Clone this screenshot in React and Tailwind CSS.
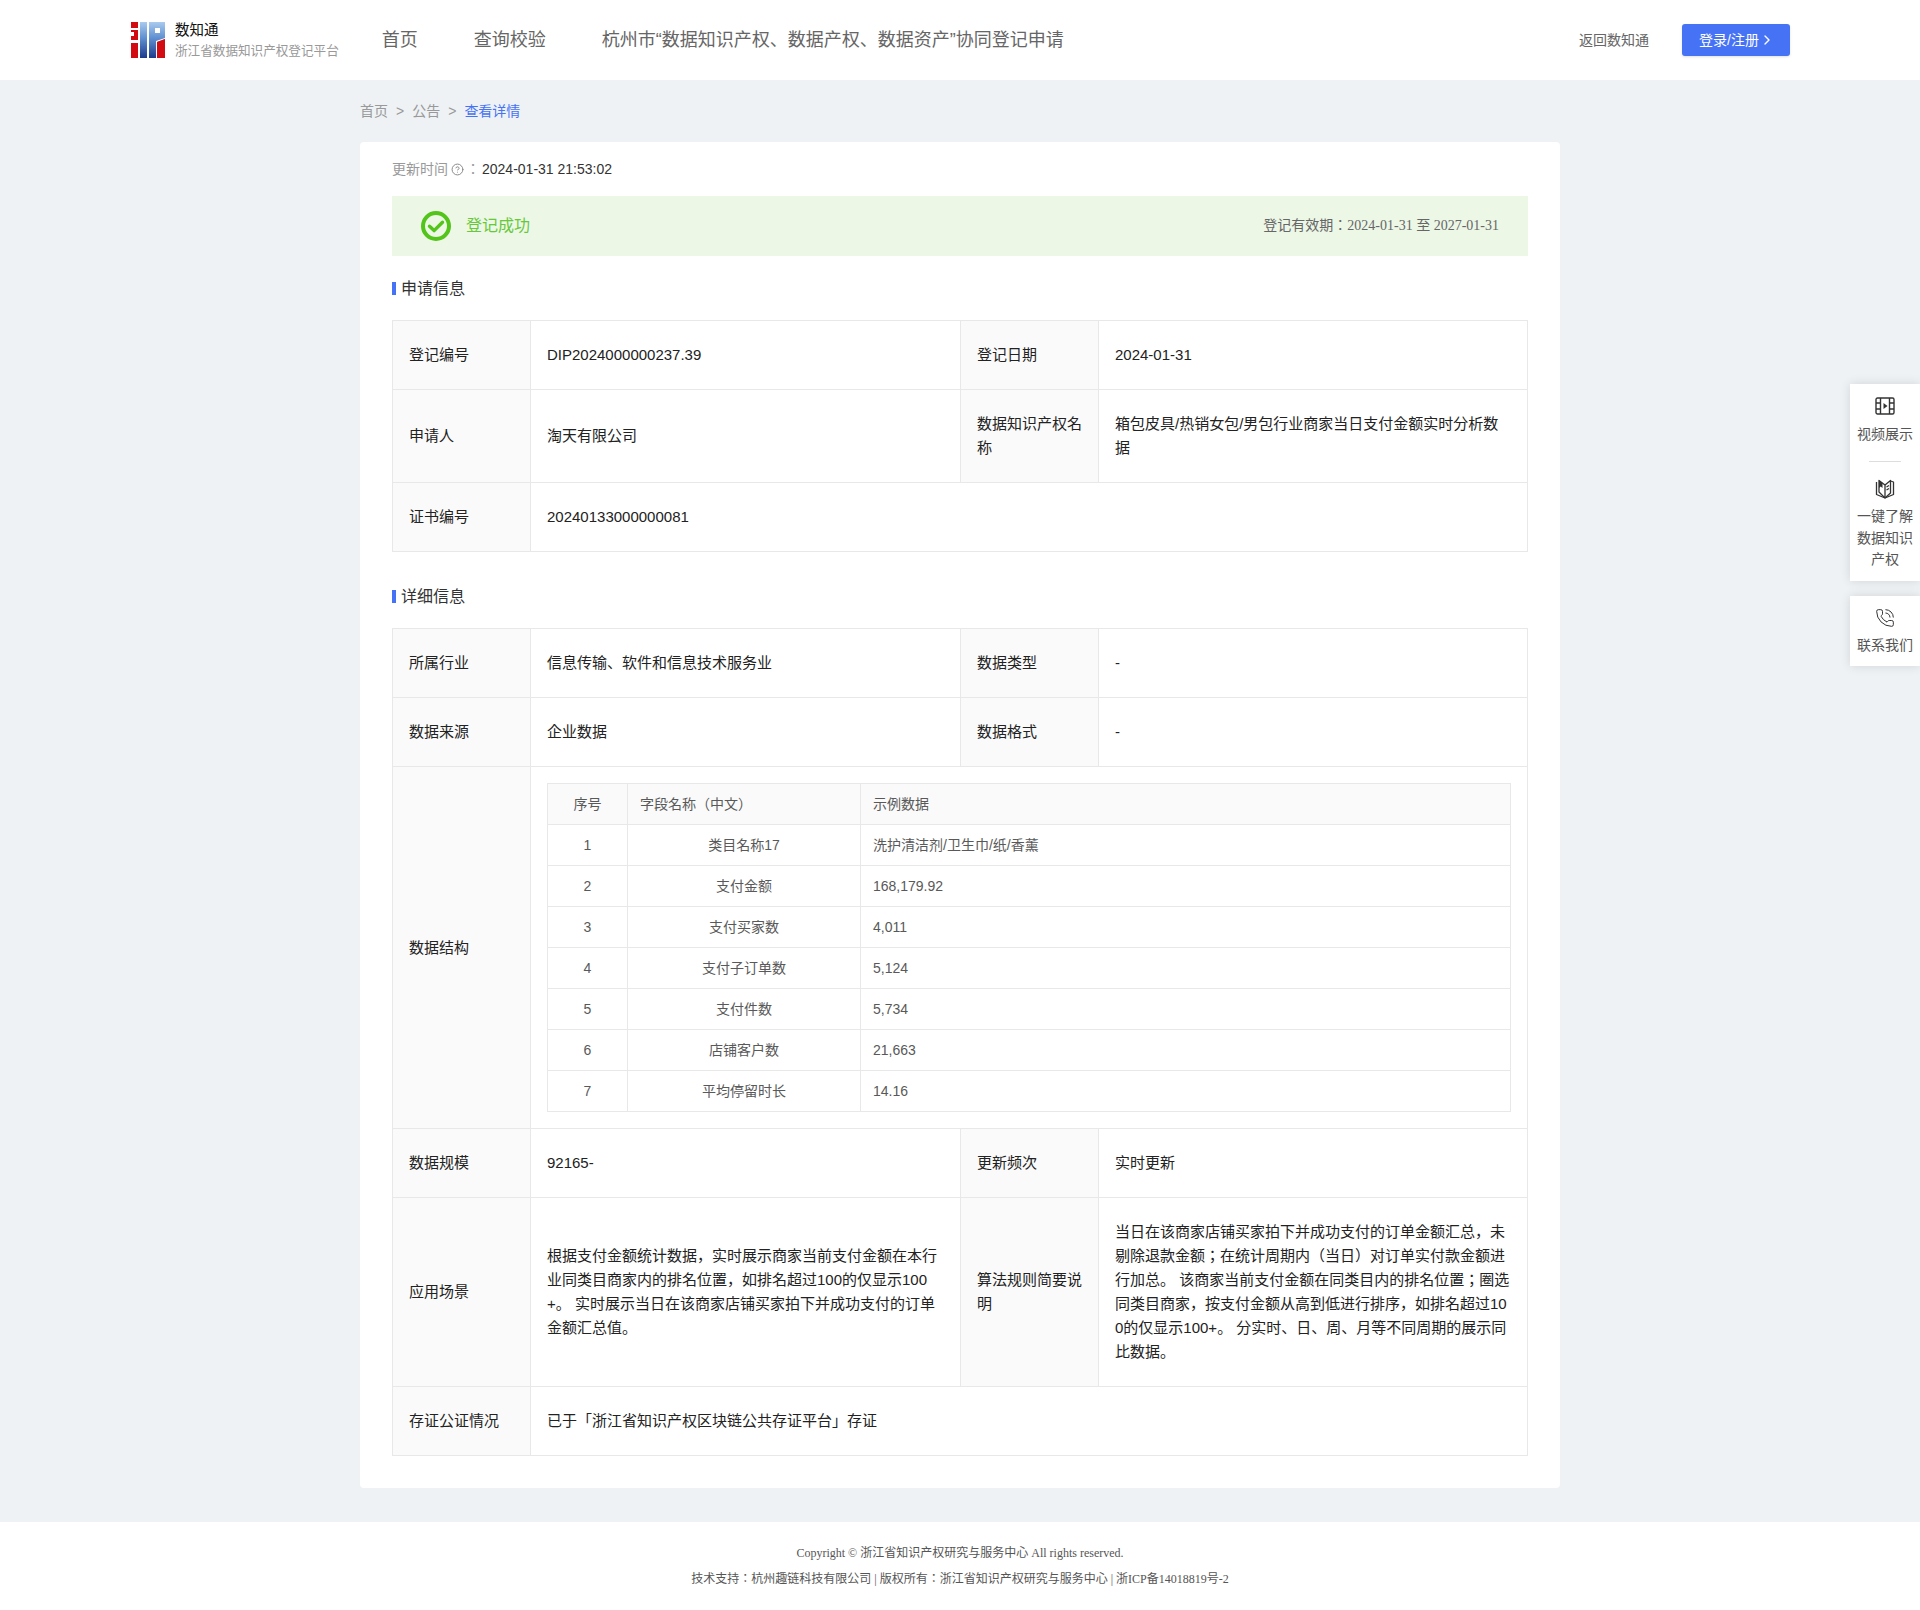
import React from "react";
import { ChevronRight, CircleHelp, PhoneCall } from "lucide-react";

const FIELDS = [
  ["1", "类目名称17", "洗护清洁剂/卫生巾/纸/香薰"],
  ["2", "支付金额", "168,179.92"],
  ["3", "支付买家数", "4,011"],
  ["4", "支付子订单数", "5,124"],
  ["5", "支付件数", "5,734"],
  ["6", "店铺客户数", "21,663"],
  ["7", "平均停留时长", "14.16"],
];

const label = "border border-[#e8e8e8] bg-[#fafafa] px-4 py-[22px] text-left font-normal text-[#222] break-all";
const value = "border border-[#e8e8e8] px-4 py-[22px] text-[#222] break-all";
const inner = "h-[41px] border border-[#e8e8e8] p-0 text-[#595959]";

function Logo() {
  return (
    <svg width="34" height="36" viewBox="0 0 34 36">
      <defs>
        <linearGradient id="logoBlue" x1="0" y1="0" x2="0" y2="1">
          <stop offset="0" stopColor="#a9cbee" />
          <stop offset="0.45" stopColor="#5f8fd0" />
          <stop offset="1" stopColor="#1d3b8b" />
        </linearGradient>
      </defs>
      <path d="M0 0h7v6H0zM0 8h7v10H0zM0 21h7v15H0z" fill="#d20a11" />
      <rect y="10" width="3" height="4" fill="#fff" />
      <rect x="9" width="7" height="36" fill="url(#logoBlue)" />
      <rect x="18" width="16" height="36" fill="url(#logoBlue)" />
      <rect x="24" y="6" width="5" height="5" fill="#fff" />
      <path d="M25 36V19l9-3v1l-8 3v16z" fill="#fff" />
      <path d="M26 36V20l8-3v19z" fill="#d20a11" />
    </svg>
  );
}

function SuccessIcon() {
  return (
    <svg width="30" height="30" viewBox="0 0 30 30" fill="none">
      <circle cx="15" cy="15" r="13" stroke="#52c41a" strokeWidth="4" />
      <path d="M8.500 15.200l4.600 4.400 8.400-8.400" stroke="#52c41a" strokeWidth="3.400" strokeLinecap="round" strokeLinejoin="round" />
    </svg>
  );
}

function FilmIcon() {
  return (
    <svg width="20" height="18" viewBox="0 0 20 18" fill="none" stroke="#333" strokeWidth="1.400">
      <rect x="1" y="1" width="18" height="16" rx="1.500" />
      <path d="M5.500 1v16M14.500 1v16M1 6h4.500M1 12h4.500M14.500 6H19M14.500 12H19" />
      <path d="M8.500 6l4 3-4 3z" fill="#333" stroke="none" />
    </svg>
  );
}

function BookIcon() {
  return (
    <svg width="20" height="20" viewBox="0 0 20 20" fill="none" stroke="#333" strokeWidth="1.300" strokeLinejoin="round">
      <path d="M1.500 3v12.500l8.500 3.500 8.500-3.500V3l-3-1" />
      <path d="M10 19V6L4 1.500V13l6 6" />
      <path d="M10 6l5.500-4.500V14L10 19" />
      <path d="M4 1.500l3.500 2.500V9L5.700 7.500 4 9z" fill="#333" stroke="none" />
      <path d="M11.500 8l2.500-1.500M11.500 11l2.500-1.500" />
    </svg>
  );
}

function SectionTitle({ children }) {
  return (
    <div className="mb-5 flex h-6 text-base text-[#333]">
      <span className="mr-[5px] h-[13px] w-1 self-center bg-[#4672f5]" />
      <span className="leading-[26px]">{children}</span>
    </div>
  );
}

function Cols() {
  return (
    <colgroup>
      <col className="w-[138px]" />
      <col className="w-[430px]" />
      <col className="w-[138px]" />
      <col className="w-[429px]" />
    </colgroup>
  );
}

export default function App() {
  return (
    <div className="relative min-h-[1610px] bg-[#eef2f5] text-[15px] leading-6 [font-family:'Liberation_Sans','Noto_Sans_CJK_JP',sans-serif]">
      <header className="flex h-20 items-center bg-white pl-[131px] pr-[130px]">
        <Logo />
        <div className="ml-[10px]">
          <div className="text-[14.500px] leading-[22px] text-[#111]">数知通</div>
          <div className="text-[12.600px] leading-[20px] text-[#999]">浙江省数据知识产权登记平台</div>
        </div>
        <nav className="ml-[43px] flex gap-14 text-lg text-[#666]">
          <span>首页</span>
          <span>查询校验</span>
          <span>杭州市“数据知识产权、数据产权、数据资产”协同登记申请</span>
        </nav>
        <span className="ml-auto text-sm text-[#666]">返回数知通</span>
        <button className="ml-[33px] flex h-8 w-[108px] items-center rounded-[3px] bg-[#4672f5] pl-[17px] text-sm text-white shadow-sm">
          登录/注册
          <ChevronRight className="h-4 w-4" strokeWidth={2} />
        </button>
      </header>

      <main className="mx-auto w-[1200px]">
        <div className="flex h-[62px] items-center gap-2 text-sm text-[#999]">
          <span>首页</span>
          <span>&gt;</span>
          <span>公告</span>
          <span>&gt;</span>
          <span className="text-[#4672f5]">查看详情</span>
        </div>

        <div className="rounded bg-white px-8 pb-8 pt-[15px]">
          <div className="mb-[15px] flex h-6 items-center text-sm text-[#999]">
            更新时间
            <CircleHelp className="ml-[3px] h-[13px] w-[13px] text-[#888]" strokeWidth={1.800} />
            <span className="ml-[2px]">：</span>
            <span className="ml-[2px] text-[#333]">2024-01-31 21:53:02</span>
          </div>

          <div className="mb-5 flex h-[60px] items-center justify-between bg-[#ecf7e6] pl-[29px] pr-[29px]">
            <div className="flex items-center gap-[15px] text-base text-[#67c83a]">
              <SuccessIcon />
              登记成功
            </div>
            <div className="text-sm text-[#666] [font-family:'Liberation_Serif','Noto_Sans_CJK_JP',serif]">
              登记有效期：2024-01-31 至 2027-01-31
            </div>
          </div>

          <SectionTitle>申请信息</SectionTitle>
          <table className="mb-8 w-[1135px] table-fixed border-collapse">
            <Cols />
            <tbody>
              <tr>
                <th className={label}>登记编号</th>
                <td className={value}>DIP2024000000237.39</td>
                <th className={label}>登记日期</th>
                <td className={value}>2024-01-31</td>
              </tr>
              <tr>
                <th className={label}>申请人</th>
                <td className={value}>淘天有限公司</td>
                <th className={label}>数据知识产权名称</th>
                <td className={value}>箱包皮具/热销女包/男包行业商家当日支付金额实时分析数据</td>
              </tr>
              <tr>
                <th className={label}>证书编号</th>
                <td className={value} colSpan={3}>20240133000000081</td>
              </tr>
            </tbody>
          </table>

          <SectionTitle>详细信息</SectionTitle>
          <table className="w-[1135px] table-fixed border-collapse">
            <Cols />
            <tbody>
              <tr>
                <th className={label}>所属行业</th>
                <td className={value}>信息传输、软件和信息技术服务业</td>
                <th className={label}>数据类型</th>
                <td className={value}>-</td>
              </tr>
              <tr>
                <th className={label}>数据来源</th>
                <td className={value}>企业数据</td>
                <th className={label}>数据格式</th>
                <td className={value}>-</td>
              </tr>
              <tr>
                <th className={label}>数据结构</th>
                <td className="border border-[#e8e8e8] p-4" colSpan={3}>
                  <table className="w-full table-fixed border-collapse text-sm">
                    <colgroup>
                      <col className="w-[80px]" />
                      <col className="w-[233px]" />
                      <col />
                    </colgroup>
                    <thead>
                      <tr className="bg-[#fafafa]">
                        <th className={`${inner} text-center font-normal`}>序号</th>
                        <th className={`${inner} pl-3 text-left font-normal`}>字段名称（中文）</th>
                        <th className={`${inner} pl-3 text-left font-normal`}>示例数据</th>
                      </tr>
                    </thead>
                    <tbody>
                      {FIELDS.map((f) => (
                        <tr key={f[0]}>
                          <td className={`${inner} text-center`}>{f[0]}</td>
                          <td className={`${inner} text-center`}>{f[1]}</td>
                          <td className={`${inner} pl-3`}>{f[2]}</td>
                        </tr>
                      ))}
                    </tbody>
                  </table>
                </td>
              </tr>
              <tr>
                <th className={label}>数据规模</th>
                <td className={value}>92165-</td>
                <th className={label}>更新频次</th>
                <td className={value}>实时更新</td>
              </tr>
              <tr>
                <th className={label}>应用场景</th>
                <td className={value}>根据支付金额统计数据，实时展示商家当前支付金额在本行业同类目商家内的排名位置，如排名超过100的仅显示100+。 实时展示当日在该商家店铺买家拍下并成功支付的订单金额汇总值。</td>
                <th className={label}>算法规则简要说明</th>
                <td className={value}>当日在该商家店铺买家拍下并成功支付的订单金额汇总，未剔除退款金额；在统计周期内（当日）对订单实付款金额进行加总。 该商家当前支付金额在同类目内的排名位置；圈选同类目商家，按支付金额从高到低进行排序，如排名超过100的仅显示100+。 分实时、日、周、月等不同周期的展示同比数据。</td>
              </tr>
              <tr>
                <th className={label}>存证公证情况</th>
                <td className={value} colSpan={3}>已于「浙江省知识产权区块链公共存证平台」存证</td>
              </tr>
            </tbody>
          </table>
        </div>
      </main>

      <footer className="mt-[34px] h-[88px] bg-white pt-[18px] text-center text-xs leading-[26px] text-[#555] [font-family:'Liberation_Serif','Noto_Sans_CJK_JP',serif]">
        <div>Copyright © 浙江省知识产权研究与服务中心 All rights reserved.</div>
        <div>技术支持：杭州趣链科技有限公司 | 版权所有：浙江省知识产权研究与服务中心 | 浙ICP备14018819号-2</div>
      </footer>

      <aside className="absolute right-0 top-[384px] w-[70px] text-center text-sm text-[#555]">
        <div className="h-[197px] bg-white pt-[13px] shadow-[0_0_10px_rgba(0,0,0,0.12)]">
          <div className="flex justify-center"><FilmIcon /></div>
          <div className="mt-[6.500px] leading-[24px]">视频展示</div>
          <div className="mx-auto mt-[15.500px] h-px w-8 bg-[#ddd]" />
          <div className="mt-[16.500px] flex justify-center"><BookIcon /></div>
          <div className="mx-auto mt-[7.500px] w-[56px] leading-[21.500px]">一键了解数据知识产权</div>
        </div>
        <div className="mt-[15px] h-[70px] bg-white pt-[12px] shadow-[0_0_10px_rgba(0,0,0,0.12)]">
          <div className="flex justify-center"><PhoneCall className="h-5 w-5" strokeWidth={1.200} color="#333" /></div>
          <div className="mt-[5px] leading-[24px]">联系我们</div>
        </div>
      </aside>
    </div>
  );
}
